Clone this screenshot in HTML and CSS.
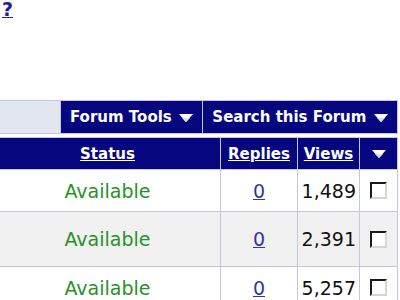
FILE: index.html
```html
<!DOCTYPE html>
<html>
<head>
<meta charset="utf-8">
<link rel="stylesheet" href="styles.css">
</head>
<body>
<div class="top"><a class="help" href="#">?</a></div>
<div class="wrap">
  <table class="tools">
    <colgroup><col class="c-blank"><col class="c-ftools"><col class="c-search"></colgroup>
    <tr>
      <td class="blank"></td>
      <td class="menu">Forum Tools <svg class="arrow" width="14" height="8" viewBox="0 0 14 8"><polygon points="0,0 14,0 7,8" fill="#fff"/><polygon points="3,4 11,4 7,8" fill="#d8e0ec"/></svg></td>
      <td class="menu">Search this Forum <svg class="arrow" width="14" height="8" viewBox="0 0 14 8"><polygon points="0,0 14,0 7,8" fill="#fff"/><polygon points="3,4 11,4 7,8" fill="#d8e0ec"/></svg></td>
    </tr>
  </table>
  <table class="forum">
    <colgroup><col class="c-title"><col class="c-status"><col class="c-replies"><col class="c-views"><col class="c-check"></colgroup>
    <tr class="head">
      <td></td>
      <td class="center"><a href="#">Status</a></td>
      <td class="center"><a href="#">Replies</a></td>
      <td class="center"><a href="#">Views</a></td>
      <td class="center"><svg class="arrow" width="14" height="8" viewBox="0 0 14 8"><polygon points="0,0 14,0 7,8" fill="#fff"/><polygon points="3,4 11,4 7,8" fill="#d8e0ec"/></svg></td>
    </tr>
    <tr class="row short">
      <td></td>
      <td class="center status">Available</td>
      <td class="center"><a class="num" href="#">0</a></td>
      <td class="views">1,489</td>
      <td class="center"><span class="check"></span></td>
    </tr>
    <tr class="row tall alt">
      <td></td>
      <td class="center status">Available</td>
      <td class="center"><a class="num" href="#">0</a></td>
      <td class="views">2,391</td>
      <td class="center"><span class="check"></span></td>
    </tr>
    <tr class="row short">
      <td></td>
      <td class="center status">Available</td>
      <td class="center"><a class="num" href="#">0</a></td>
      <td class="views">5,257</td>
      <td class="center"><span class="check"></span></td>
    </tr>
  </table>
</div>
</body>
</html>
```
FILE: styles.css
```css
html, body {
  margin: 0;
  padding: 0;
  background: #fff;
  overflow: hidden;
}
body {
  font-family: "DejaVu Sans", Verdana, sans-serif;
  width: 400px;
  height: 300px;
}
.top {
  height: 18px;
  padding-left: 2px;
  font: bold 19px/18px "DejaVu Sans", sans-serif;
}
.help {
  color: #1e1e96;
  text-decoration: underline;
}
.wrap {
  margin: 82px 0 0 -30px;
  width: 428px;
}
table {
  border-collapse: separate;
  border-spacing: 1px;
  background: #c5c5e0;
  width: 428px;
  table-layout: fixed;
}
td {
  padding: 0;
}
.c-blank { width: 89px; }
.c-ftools { width: 141px; }
.c-search { width: 194px; }
.tools {
  margin-bottom: 3px;
}
.tools td {
  height: 32px;
}
.blank {
  background: #e1e6f0;
}
.menu {
  background: #06067e;
  color: #fff;
  font-weight: bold;
  font-size: 15px;
  text-align: center;
  white-space: nowrap;
}
.arrow {
  vertical-align: middle;
  margin-left: 2px;
}
.c-title { width: 23px; }
.c-status { width: 225px; }
.c-replies { width: 76px; }
.c-views { width: 61px; }
.c-check { width: 37px; }
.head td {
  height: 31px;
  background: #06067e;
  font-weight: bold;
  font-size: 15px;
}
.head a {
  color: #fff;
  text-decoration: underline;
}
.head .arrow {
  margin-left: 0;
}
.center {
  text-align: center;
}
.row td {
  background: #fff;
  font-size: 19px;
  color: #111;
}
.row.alt td {
  background: #f1f1f1;
}
.row.short td {
  height: 41px;
}
.row.tall td {
  height: 54px;
}
.row .status {
  color: #27922a;
}
.num {
  color: #3535a8;
  text-decoration: underline;
}
.views {
  text-align: right;
  padding-right: 3px;
}
.check {
  display: inline-block;
  width: 13px;
  height: 13px;
  background: #fff;
  border-top: 2px solid #1a1a1a;
  border-left: 2px solid #1a1a1a;
  border-right: 2px solid #d6d6d6;
  border-bottom: 2px solid #d6d6d6;
  vertical-align: middle;
  margin-top: -3px;
}
```
